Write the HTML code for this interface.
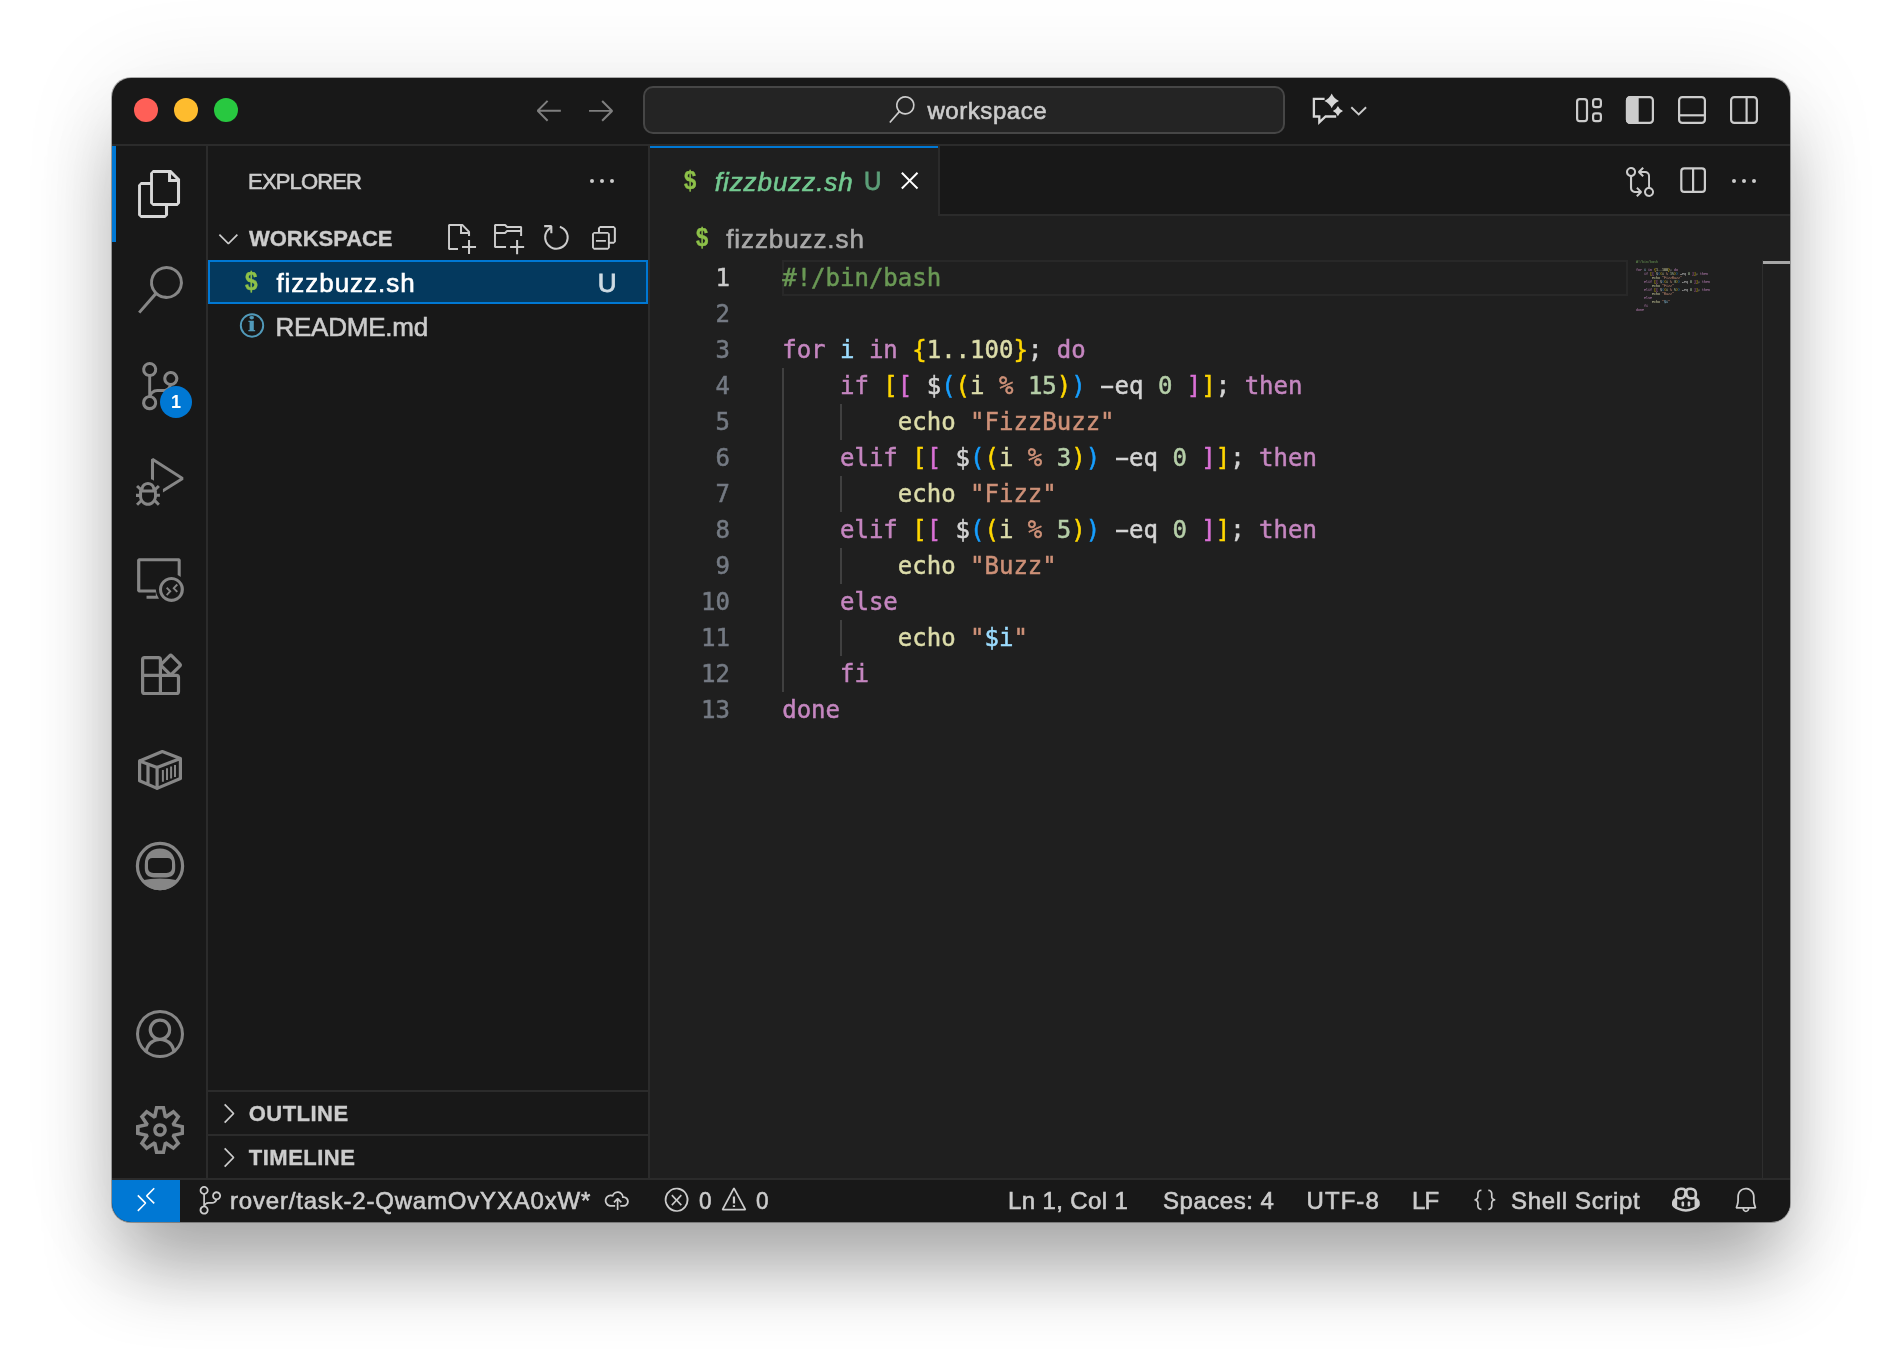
<!DOCTYPE html>
<html lang="en"><head><meta charset="utf-8"><title>fizzbuzz.sh — workspace</title>
<style>
html,body{margin:0;padding:0}
body{width:1902px;height:1370px;background:#fff;position:relative;overflow:hidden}
#win{position:absolute;left:112px;top:78px;width:1678px;height:1144px;background:#181818;border-radius:19px;overflow:hidden;
 box-shadow:0 0 0 1px rgba(0,0,0,.3),0 4px 100px rgba(0,0,0,.09),0 56px 76px -8px rgba(0,0,0,.31)}
#ly{position:absolute;left:0;top:0;width:100%;height:100%;will-change:transform}
#ly>div,#ly>svg,#ly>pre{position:absolute}
.t{white-space:pre}
.ic{display:block;overflow:visible}
pre{margin:0;font:24px/36px 'DejaVu Sans Mono', 'Liberation Mono', monospace;color:#d4d4d4;-webkit-text-stroke:.5px}
.nums{text-align:right;color:#747a83}
.nums .cur{color:#cccccc}
.mm{transform-origin:0 0;transform:scale(.1384,.1111);opacity:.8}
.hy{display:inline-block;transform:scaleX(1.85)}
.com{color:#6A9955}.kw{color:#C586C0}.var{color:#9CDCFE}.y{color:#FFD700}.p{color:#DA70D6}.b{color:#179FFF}.fn{color:#DCDCAA}.num{color:#B5CEA8}.str{color:#CE9178}</style></head>
<body><div id="win"><div id="ly">
<div style="left:0px;top:66px;width:1678px;height:2px;background:#2b2b2b;"></div>
<div style="left:22px;top:20px;width:24px;height:24px;border-radius:50%;background:#ff5f57"></div>
<div style="left:62px;top:20px;width:24px;height:24px;border-radius:50%;background:#febc2e"></div>
<div style="left:102px;top:20px;width:24px;height:24px;border-radius:50%;background:#28c840"></div>
<svg class="ic" style="left:421.31px;top:16.07px" width="31.77" height="31.77" viewBox="0 0 16 16" preserveAspectRatio="none" fill="#7f7f7f"><path d="M6.99 3.09 2.03 8.11V8.8L6.99 13.81L7.73 13.07L3.57 8.96H14.03V7.95H3.57L7.73 3.79Z"/></svg>
<svg class="ic" style="left:473.24px;top:15.93px" width="31.72" height="31.72" viewBox="0 0 16 16" preserveAspectRatio="none" fill="#7f7f7f"><path d="M9.01 13.87 14.03 8.91V8.16L9.01 3.2L8.27 3.89L12.43 8.05H2.03V9.01H12.43L8.27 13.17Z"/></svg>
<div style="left:531px;top:8px;width:642px;height:48px;box-sizing:border-box;border:2px solid #464646;border-radius:10px;background:#242424"></div>
<svg class="ic" style="left:775.91px;top:18.31px" width="27.27" height="27.27" viewBox="0 0 16 16" preserveAspectRatio="none" fill="#cccccc"><path d="M10.19 0Q8.53 0 7.17 0.88Q5.81 1.76 5.15 3.25Q4.48 4.75 4.72 6.35Q4.96 7.95 6.03 9.12L0.69 15.25L1.44 15.89L6.77 9.81Q8.21 10.93 10 10.99Q11.79 11.04 13.28 10.03Q14.77 9.01 15.36 7.31Q15.95 5.6 15.41 3.87Q14.88 2.13 13.41 1.07Q11.95 0 10.19 0ZM10.19 9.97Q8.96 9.97 7.92 9.39Q6.88 8.8 6.27 7.76Q5.65 6.72 5.65 5.49Q5.65 4.27 6.27 3.23Q6.88 2.19 7.92 1.6Q8.96 1.01 10.19 1.01Q11.41 1.01 12.43 1.6Q13.44 2.19 14.05 3.23Q14.67 4.27 14.67 5.49Q14.67 6.72 14.05 7.76Q13.44 8.8 12.43 9.41Q11.41 10.03 10.19 10.03Z"/></svg>
<div class="t" style="left:815.40px;top:15.58px;font:24px/34px 'Liberation Sans', Arial, sans-serif;color:#cccccc;letter-spacing:0.567px;-webkit-text-stroke:0.6px;">workspace</div>
<svg class="ic" style="left:1198px;top:13px" width="36" height="36" viewBox="1310 91 36 36"><path d="M1324.6 98.9H1313.9V116.5H1319.3V122.3L1325.6 116.5H1336.2" fill="none" stroke="#d7d7d7" stroke-width="2.3" stroke-linejoin="miter"/><path d="M1331.7 93.6Q1333.89 98.71 1339 100.9Q1333.89 103.09 1331.7 108.2Q1329.51 103.09 1324.4 100.9Q1329.51 98.71 1331.7 93.6ZM1337.9 106Q1339.43 109.57 1343 111.1Q1339.43 112.63 1337.9 116.2Q1336.37 112.63 1332.8 111.1Q1336.37 109.57 1337.9 106Z" fill="#d7d7d7"/></svg>
<svg class="ic" style="left:1236px;top:25px" width="21" height="15" viewBox="1348 103 21 15"><path d="M1351.3 107.2 L1358.7 114.4 L1366.1 107.2" fill="none" stroke="#cccccc" stroke-width="1.9"/></svg>
<svg class="ic" style="left:1462px;top:17.8px" width="30" height="28.2" viewBox="1574 95.8 30 28.2"><rect x="1577.1" y="98.9" width="9.9" height="22" rx="2.6" fill="none" stroke="#cccccc" stroke-width="2.2"/><rect x="1593.1" y="98.9" width="7.8" height="8.1" rx="2.4" fill="none" stroke="#cccccc" stroke-width="2.2"/><rect x="1593.1" y="113.1" width="7.8" height="7.8" rx="2.4" fill="none" stroke="#cccccc" stroke-width="2.2"/></svg>
<svg class="ic" style="left:1512px;top:16px" width="32" height="32" viewBox="1624 94 32 32"><rect x="1627" y="97.1" width="25.9" height="25.8" rx="3.2" fill="none" stroke="#cccccc" stroke-width="2.2"/><path d="M1637.6 97.1H1630.2a3.2 3.2 0 0 0-3.2 3.2V119.7a3.2 3.2 0 0 0 3.2 3.2H1637.6Z" fill="#cccccc" stroke="#cccccc" stroke-width="2.2"/></svg>
<svg class="ic" style="left:1564px;top:16px" width="32" height="32" viewBox="1676 94 32 32"><rect x="1679.1" y="97.1" width="25.8" height="25.8" rx="3.2" fill="none" stroke="#cccccc" stroke-width="2.2"/><path d="M1679.1 115.3H1704.9" stroke="#cccccc" stroke-width="2.2"/></svg>
<svg class="ic" style="left:1616px;top:16px" width="32" height="32" viewBox="1728 94 32 32"><rect x="1731.1" y="97.1" width="25.8" height="25.8" rx="3.2" fill="none" stroke="#cccccc" stroke-width="2.2"/><path d="M1746.6 97.1V122.9" stroke="#cccccc" stroke-width="2.2"/></svg>
<div style="left:94px;top:68px;width:2px;height:1032px;background:#2b2b2b;"></div>
<div style="left:0px;top:68px;width:4px;height:96px;background:#0078d4;"></div>
<svg class="ic" style="left:23.94px;top:91.98px" width="48.05" height="48.05" viewBox="0 0 16 16" preserveAspectRatio="none" fill="#d7d7d7"><path d="M11.68 0H5.65L4.69 1.01V4H1.65L0.69 5.01V15.04L1.65 16H9.71L10.67 15.04V12H13.81L14.67 11.04V2.99ZM11.68 1.39 13.28 2.99H11.68ZM9.65 14.99H1.65V5.01H4.69V11.04L5.65 12H9.65ZM13.65 10.99H5.65V1.01H10.67V4H13.65Z"/></svg>
<svg class="ic" style="left:23.98px;top:187.93px" width="47.95" height="47.95" viewBox="0 0 16 16" preserveAspectRatio="none" fill="#868686"><path d="M10.19 0Q8.53 0 7.17 0.88Q5.81 1.76 5.15 3.25Q4.48 4.75 4.72 6.35Q4.96 7.95 6.03 9.12L0.69 15.25L1.44 15.89L6.77 9.81Q8.21 10.93 10 10.99Q11.79 11.04 13.28 10.03Q14.77 9.01 15.36 7.31Q15.95 5.6 15.41 3.87Q14.88 2.13 13.41 1.07Q11.95 0 10.19 0ZM10.19 9.97Q8.96 9.97 7.92 9.39Q6.88 8.8 6.27 7.76Q5.65 6.72 5.65 5.49Q5.65 4.27 6.27 3.23Q6.88 2.19 7.92 1.6Q8.96 1.01 10.19 1.01Q11.41 1.01 12.43 1.6Q13.44 2.19 14.05 3.23Q14.67 4.27 14.67 5.49Q14.67 6.72 14.05 7.76Q13.44 8.8 12.43 9.41Q11.41 10.03 10.19 10.03Z"/></svg>
<svg class="ic" style="left:23.81px;top:283.77px" width="48.34" height="48.34" viewBox="0 0 16 16" preserveAspectRatio="none" fill="#868686"><path d="M14.03 5.49Q14.03 4.8 13.65 4.19Q13.28 3.57 12.64 3.25Q12 2.93 11.31 2.99Q10.61 3.04 10.03 3.47Q9.44 3.89 9.2 4.56Q8.96 5.23 9.07 5.92Q9.17 6.61 9.65 7.12Q10.13 7.63 10.83 7.84Q10.56 8.37 10.08 8.67Q9.6 8.96 9.01 8.96H7.04Q5.87 8.96 5.01 9.76V4.91Q5.97 4.75 6.53 3.97Q7.09 3.2 7.01 2.24Q6.93 1.28 6.21 0.64Q5.49 0 4.53 0Q3.57 0 2.85 0.64Q2.13 1.28 2.05 2.24Q1.97 3.2 2.53 3.97Q3.09 4.75 4.05 4.91V10.99Q3.09 11.2 2.51 11.95Q1.92 12.69 2 13.65Q2.08 14.61 2.75 15.28Q3.41 15.95 4.37 16Q5.33 16.05 6.08 15.47Q6.83 14.88 6.99 13.92Q7.15 12.96 6.67 12.16Q6.19 11.36 5.23 11.09Q5.49 10.56 5.97 10.27Q6.45 9.97 7.04 9.97H9.01Q9.97 9.97 10.75 9.41Q11.52 8.85 11.84 7.95Q12.75 7.84 13.39 7.12Q14.03 6.4 14.03 5.49ZM3.04 2.51Q3.04 1.87 3.47 1.44Q3.89 1.01 4.53 1.01Q5.17 1.01 5.6 1.44Q6.03 1.87 6.03 2.48Q6.03 3.09 5.6 3.55Q5.17 4 4.53 4Q3.89 4 3.47 3.55Q3.04 3.09 3.04 2.51ZM6.03 13.44Q6.03 14.08 5.6 14.51Q5.17 14.93 4.53 14.93Q3.89 14.93 3.47 14.51Q3.04 14.08 3.04 13.47Q3.04 12.85 3.47 12.4Q3.89 11.95 4.53 11.95Q5.17 11.95 5.6 12.4Q6.03 12.85 6.03 13.44ZM11.52 6.99Q10.88 6.99 10.45 6.53Q10.03 6.08 10.03 5.47Q10.03 4.85 10.45 4.43Q10.88 4 11.49 4Q12.11 4 12.56 4.43Q13.01 4.85 13.01 5.47Q13.01 6.08 12.56 6.53Q12.11 6.99 11.52 6.99Z"/></svg>
<div class="t" style="left:48px;top:308px;width:32px;height:32px;border-radius:16px;background:#0078d4;color:#fff;font:bold 18px/32px 'Liberation Sans', Arial, sans-serif;text-align:center">1</div>
<svg class="ic" style="left:24.17px;top:380.33px" width="47.84" height="47.84" viewBox="0 0 16 16" preserveAspectRatio="none" fill="#868686"><path d="M7.31 9.01 6.4 9.87Q6.19 9.07 5.52 8.53Q4.85 8 4 8Q3.15 8 2.48 8.53Q1.81 9.07 1.6 9.87L0.69 9.01L0 9.71L1.17 10.83L1.01 10.99V12H0V13.01H1.01V13.07Q1.07 13.55 1.28 14.03L0 15.31L0.69 16L1.81 14.88Q2.19 15.41 2.77 15.71Q3.36 16 4 16Q4.64 16 5.23 15.71Q5.81 15.41 6.19 14.88L7.31 16L8 15.31L6.72 13.97Q6.93 13.55 6.99 13.01V12.96H8V12H6.99V10.99L6.88 10.83L8 9.71ZM4 9.01Q4.64 9.01 5.07 9.44Q5.49 9.87 5.49 10.51H2.51Q2.51 9.87 2.93 9.44Q3.36 9.01 4 9.01ZM6.03 13.01Q5.92 13.81 5.36 14.37Q4.8 14.93 4 14.99Q3.2 14.93 2.64 14.37Q2.08 13.81 2.03 13.01V11.52H6.03ZM15.84 6.4V7.25L9.01 11.57V10.4L14.67 6.83L6.03 1.33V7.63Q5.55 7.31 5.01 7.15V0.43L5.76 0Z"/></svg>
<svg class="ic" style="left:23.99px;top:475.89px" width="47.91" height="47.91" viewBox="0 0 16 16" preserveAspectRatio="none" fill="#868686"><path d="M0.91 1.44H14.45L14.93 1.92V7.68Q14.45 7.31 13.92 7.04V2.45H1.44V11.84H6.61Q6.61 13.55 7.68 14.93H3.52V13.92H6.61V12.85H0.91L0.37 12.37V1.92ZM11.84 7.68Q10.72 7.68 9.76 8.24Q8.8 8.8 8.24 9.76Q7.68 10.72 7.68 11.84Q7.68 12.96 8.24 13.92Q8.8 14.88 9.76 15.44Q10.72 16 11.84 16Q12.96 16 13.92 15.44Q14.88 14.88 15.44 13.92Q16 12.96 16 11.84Q16 10.72 15.44 9.76Q14.88 8.8 13.92 8.24Q12.96 7.68 11.84 7.68ZM11.84 14.93Q10.99 14.93 10.27 14.53Q9.55 14.13 9.12 13.41Q8.69 12.69 8.69 11.84Q8.69 10.99 9.12 10.27Q9.55 9.55 10.27 9.12Q10.99 8.69 11.84 8.69Q12.69 8.69 13.41 9.12Q14.13 9.55 14.53 10.27Q14.93 10.99 14.93 11.84Q14.93 12.69 14.53 13.41Q14.13 14.13 13.41 14.53Q12.69 14.93 11.84 14.93ZM13.55 12.85 12.16 11.41 13.55 9.97 14.03 10.45 13.01 11.41 14.03 12.43ZM10.03 11.52 10.99 12.48 10.03 13.49 10.45 13.92 11.89 12.48 10.45 11.04Z"/></svg>
<svg class="ic" style="left:24px;top:572px" width="48" height="48" viewBox="136 650 48 48"><path d="M142.6 659.6a2 2 0 0 1 2-2h13.8a2 2 0 0 1 2 2v15.8h16.1a2 2 0 0 1 2 2v14.1a2 2 0 0 1-2 2h-31.9a2 2 0 0 1-2-2ZM142.6 675.4h17.8v18.1" fill="none" stroke="#868686" stroke-width="3.2" stroke-linejoin="round"/><rect x="163.5" y="657.7" width="14.4" height="14.4" rx="1.6" transform="rotate(45 170.7 664.9)" fill="none" stroke="#868686" stroke-width="3.2"/></svg>
<svg class="ic" style="left:24px;top:668px" width="48" height="48" viewBox="136 746 48 48"><path d="M162.3 751.6L180.4 758.6V778.5L157.1 788.4L139.6 780.8V761Z M139.6 761L157.1 767.4L180.4 758.6 M157.1 767.4V788.4 M148 764.3V784.3" fill="none" stroke="#868686" stroke-width="3.2" stroke-linejoin="round" stroke-linecap="round"/><path d="M162.9 770V781.8 M167 768.3V780.1 M171.1 766.6V778.6 M175 765V777" fill="none" stroke="#868686" stroke-width="2" stroke-linecap="butt"/></svg>
<svg class="ic" style="left:24px;top:764px" width="48" height="48" viewBox="136 842 48 48"><circle cx="160" cy="866" r="22.6" fill="none" stroke="#868686" stroke-width="3.2"/><path fill-rule="evenodd" fill="#868686" d="M144.8 864.5C144.8 854 151.5 848.5 160 848.5S175.2 854 175.2 864.5V868.5C175.2 874.5 171.5 877.4 166 877.4H154C148.5 877.4 144.8 874.5 144.8 868.5ZM148 862.6C148 859.6 149.6 858.1 152.5 858.1H167.5C170.4 858.1 172 859.6 172 862.6V867.5C172 871 170 872.9 166.5 872.9H153.5C150 872.9 148 871 148 867.5Z"/><path fill="#868686" d="M140.8 880.6Q160 876.6 179.2 880.6A24 24 0 0 1 140.8 880.6Z"/></svg>
<svg class="ic" style="left:24.00px;top:932.00px" width="48.00" height="48.00" viewBox="0 0 16 16" preserveAspectRatio="none" fill="#868686"><path d="M16 8Q16 5.81 14.93 3.97Q13.87 2.13 12.03 1.07Q10.19 0 8 0Q5.81 0 3.97 1.07Q2.13 2.13 1.07 3.97Q0 5.81 0 8Q0 9.76 0.75 11.36Q1.49 12.96 2.83 14.08L3.52 14.61Q5.55 16 8 16Q10.45 16 12.48 14.61L13.23 14.08Q14.51 12.96 15.25 11.36Q16 9.76 16 8ZM8 14.99Q5.81 14.99 4 13.71L4.05 13.33Q4.21 12.8 4.48 12.35Q4.75 11.89 5.12 11.52Q5.49 11.15 5.92 10.88Q6.35 10.61 6.91 10.48Q7.47 10.35 8 10.35Q8.8 10.35 9.57 10.64Q10.35 10.93 10.91 11.49Q11.47 12.05 11.79 12.8Q11.95 13.23 12.05 13.71Q10.24 14.99 8 14.99ZM5.55 7.57Q5.33 7.09 5.33 6.56Q5.33 6.03 5.55 5.55Q5.76 5.07 6.11 4.72Q6.45 4.37 6.93 4.13Q7.41 3.89 8 3.89Q8.59 3.89 9.04 4.11Q9.49 4.32 9.87 4.69Q10.24 5.07 10.45 5.55Q10.67 6.03 10.67 6.59Q10.67 7.15 10.45 7.6Q10.24 8.05 9.87 8.43Q9.49 8.8 9.01 9.01Q8 9.44 6.93 9.01Q6.51 8.8 6.13 8.43Q5.76 8.05 5.55 7.57ZM12.96 12.91Q12.96 12.91 12.96 12.85V12.8Q12.75 12.05 12.29 11.41Q11.84 10.77 11.2 10.29Q10.72 9.92 10.13 9.65Q10.4 9.49 10.61 9.28Q10.99 8.91 11.25 8.48Q11.79 7.63 11.73 6.56Q11.79 5.81 11.49 5.12Q11.2 4.43 10.67 3.89Q10.13 3.36 9.44 3.09Q8.75 2.83 7.97 2.83Q7.2 2.83 6.51 3.09Q5.81 3.36 5.31 3.89Q4.8 4.43 4.51 5.12Q4.21 5.81 4.21 6.56Q4.21 7.09 4.37 7.6Q4.53 8.11 4.75 8.48Q4.96 8.85 5.39 9.28Q5.6 9.49 5.87 9.71Q5.33 9.92 4.85 10.29Q4.21 10.77 3.76 11.41Q3.31 12.05 3.04 12.85V12.91Q2.08 11.95 1.55 10.67Q1.01 9.39 1.01 8Q1.01 6.08 1.95 4.48Q2.88 2.88 4.48 1.95Q6.08 1.01 8 1.01Q9.92 1.01 11.52 1.95Q13.12 2.88 14.05 4.48Q14.99 6.08 14.99 8Q14.99 9.39 14.48 10.67Q13.97 11.95 12.96 12.91Z"/></svg>
<svg class="ic" style="left:24.00px;top:1028.00px" width="48.00" height="48.00" viewBox="0 0 16 16" preserveAspectRatio="none" fill="#868686"><path d="M13.23 5.81 16 6.4V9.6L13.23 10.19L14.83 12.53L12.53 14.77L10.19 13.23L9.6 16H6.4L5.81 13.23L3.47 14.83L1.23 12.53L2.77 10.19L0 9.6V6.4L2.77 5.81L1.23 3.47L3.47 1.17L5.81 2.77L6.4 0H9.6L10.19 2.77L12.53 1.17L14.83 3.47ZM12.21 9.23 14.88 8.69V7.36L12.21 6.77L11.84 5.92L13.33 3.63L12.43 2.67L10.13 4.21L9.23 3.84L8.69 1.17H7.36L6.83 3.84L5.97 4.21L3.68 2.67L2.72 3.63L4.27 5.92L3.89 6.77L1.23 7.36V8.69L3.89 9.23L4.27 10.08L2.72 12.37L3.68 13.33L5.97 11.79L6.83 12.16L7.36 14.83H8.69L9.23 12.16L10.13 11.79L12.43 13.33L13.33 12.37L11.84 10.08ZM6.72 6.08Q7.31 5.71 8 5.71Q8.96 5.71 9.63 6.37Q10.29 7.04 10.29 8Q10.29 8.8 9.76 9.44Q9.23 10.08 8.43 10.24Q7.63 10.4 6.91 10.03Q6.19 9.65 5.89 8.88Q5.6 8.11 5.81 7.33Q6.03 6.56 6.72 6.08ZM7.36 8.96Q7.68 9.12 8 9.12Q8.48 9.12 8.8 8.8Q9.12 8.48 9.12 8.03Q9.12 7.57 8.88 7.28Q8.64 6.99 8.24 6.91Q7.84 6.83 7.47 7.01Q7.09 7.2 6.93 7.57Q6.77 7.95 6.91 8.35Q7.04 8.75 7.36 8.96Z"/></svg>
<div style="left:536px;top:68px;width:2px;height:1032px;background:#2b2b2b;"></div>
<div class="t" style="left:136.10px;top:87.98px;font:22px/31px 'Liberation Sans', Arial, sans-serif;color:#cccccc;letter-spacing:-0.847px;-webkit-text-stroke:0.6px;">EXPLORER</div>
<svg class="ic" style="left:476px;top:99px" width="28" height="8" viewBox="588 177 28 8"><circle cx="592" cy="181" r="2" fill="#cccccc"/><circle cx="602" cy="181" r="2" fill="#cccccc"/><circle cx="612" cy="181" r="2" fill="#cccccc"/></svg>
<svg class="ic" style="left:100.62px;top:144.80px" width="30.87" height="30.87" viewBox="0 0 16 16" preserveAspectRatio="none" fill="#cccccc"><path d="M8 10.08 12.32 5.71 12.96 6.35 8.27 10.99H7.68L2.99 6.35L3.63 5.71Z"/></svg>
<div class="t" style="left:137.10px;top:144.88px;font:normal bold 22px/31px 'Liberation Sans', Arial, sans-serif;color:#cccccc;letter-spacing:-0.055px;-webkit-text-stroke:0.35px;">WORKSPACE</div>
<svg class="ic" style="left:331.95px;top:143.96px" width="32.04" height="32.04" viewBox="0 0 16 16" preserveAspectRatio="none" fill="#cccccc"><path d="M9.49 1.12 12.91 4.59 13.01 5.01V6.99H12V5.97H8V1.97H2.99V13.01H6.99V13.97H2.51L2.03 13.49V1.49L2.51 1.01H9.23ZM9.01 1.97V5.01H11.89ZM13.01 16H12V13.01H9.01V12H12V9.01H13.01V12H16V13.01H13.01Z"/></svg>
<svg class="ic" style="left:379.81px;top:143.91px" width="32.14" height="32.14" viewBox="0 0 16 16" preserveAspectRatio="none" fill="#cccccc"><path d="M14.51 1.97H7.73L6.88 1.17L6.51 1.01H1.49L1.01 1.49V12.48L1.49 13.01H6.99V12H1.97V5.97H6.51L6.83 5.87L7.68 5.01H14.03L13.97 6.99H14.99V2.51ZM13.97 4H7.47L7.15 4.16L6.29 5.01H2.03V2.03H6.29L7.15 2.88L7.52 2.99H14.03ZM13.01 16H12V13.01H9.01V12H12V9.01H13.01V12H16V13.01H13.01Z"/></svg>
<svg class="ic" style="left:427.58px;top:143.15px" width="32.84" height="32.84" viewBox="0 0 16 16" preserveAspectRatio="none" fill="#cccccc"><path d="M4.69 2.99H2.03V1.97H5.49L6.03 2.51V5.97H5.01V4Q3.63 5.01 3.17 6.69Q2.72 8.37 3.41 9.97Q4.11 11.57 5.63 12.4Q7.15 13.23 8.85 12.93Q10.56 12.64 11.71 11.36Q12.85 10.08 12.99 8.35Q13.12 6.61 12.16 5.2Q11.2 3.79 9.55 3.25L9.81 2.29Q11.15 2.72 12.13 3.65Q13.12 4.59 13.6 5.87Q14.08 7.15 13.97 8.51Q13.87 9.87 13.17 11.04Q12.48 12.21 11.33 12.99Q10.19 13.76 8.83 13.95Q7.47 14.13 6.16 13.71Q4.85 13.28 3.87 12.35Q2.88 11.41 2.4 10.13Q1.92 8.85 2.03 7.49Q2.13 6.13 2.83 4.96Q3.52 3.79 4.69 2.99Z"/></svg>
<svg class="ic" style="left:476.05px;top:144.00px" width="31.80" height="31.80" viewBox="0 0 16 16" preserveAspectRatio="none" fill="#cccccc"><path d="M9.01 9.01H4V9.97H9.01ZM5.01 2.99 6.03 1.97H13.01L14.03 2.99V9.97L13.01 10.99H10.99V13.01L10.03 13.97H2.99L2.03 13.01V5.97L2.99 5.01H5.01ZM6.03 5.01H10.03L10.99 5.97V9.97H13.01V2.99H6.03ZM10.03 5.97H2.99V13.01H10.03Z"/></svg>
<div style="left:96px;top:182px;width:440px;height:44px;box-sizing:border-box;border:2px solid #0078d4;background:#04395e"></div>
<div class="t" style="left:133.00px;top:184.96px;font:normal bold 25.5px/36px 'Liberation Sans', Arial, sans-serif;color:#8dc149;letter-spacing:0.000px;transform:scaleX(0.886);transform-origin:0 0;-webkit-text-stroke:0.35px;">$</div>
<div class="t" style="left:164.40px;top:186.59px;font:26px/36px 'Liberation Sans', Arial, sans-serif;color:#ffffff;letter-spacing:0.966px;-webkit-text-stroke:0.6px;">fizzbuzz.sh</div>
<div class="t" style="left:485.70px;top:186.59px;font:26px/36px 'Liberation Sans', Arial, sans-serif;color:#cfdbe4;letter-spacing:0.000px;-webkit-text-stroke:0.8px;">U</div>
<svg class="ic" style="left:126px;top:234px;" width="28" height="28" viewBox="0 0 28 28"><circle cx="14" cy="13.5" r="11.2" fill="none" stroke="#519aba" stroke-width="1.9"/></svg>
<div class="t" style="left:136.20px;top:230.39px;font:normal bold 22px/31px 'Liberation Serif', serif;color:#519aba;letter-spacing:0.000px;transform:scaleX(1.200);transform-origin:0 0;-webkit-text-stroke:0.35px;">i</div>
<div class="t" style="left:163.40px;top:231.09px;font:26px/36px 'Liberation Sans', Arial, sans-serif;color:#cccccc;letter-spacing:-0.215px;-webkit-text-stroke:0.6px;">README.md</div>
<div style="left:96px;top:1012px;width:440px;height:2px;background:#2b2b2b;"></div>
<svg class="ic" style="left:100.97px;top:1019.74px" width="30.91" height="30.91" viewBox="0 0 16 16" preserveAspectRatio="none" fill="#cccccc"><path d="M10.08 8 5.71 3.68 6.35 3.04 10.99 7.73V8.32L6.35 13.01L5.71 12.37Z"/></svg>
<div class="t" style="left:136.80px;top:1019.68px;font:normal bold 22px/31px 'Liberation Sans', Arial, sans-serif;color:#cccccc;letter-spacing:0.454px;-webkit-text-stroke:0.35px;">OUTLINE</div>
<div style="left:96px;top:1056px;width:440px;height:2px;background:#2b2b2b;"></div>
<svg class="ic" style="left:100.97px;top:1063.74px" width="30.91" height="30.91" viewBox="0 0 16 16" preserveAspectRatio="none" fill="#cccccc"><path d="M10.08 8 5.71 3.68 6.35 3.04 10.99 7.73V8.32L6.35 13.01L5.71 12.37Z"/></svg>
<div class="t" style="left:136.80px;top:1063.68px;font:normal bold 22px/31px 'Liberation Sans', Arial, sans-serif;color:#cccccc;letter-spacing:0.487px;-webkit-text-stroke:0.35px;">TIMELINE</div>
<div style="left:538px;top:68px;width:1140px;height:1032px;background:#1f1f1f;"></div>
<div style="left:538px;top:68px;width:1140px;height:68px;background:#181818;"></div>
<div style="left:538px;top:136px;width:1140px;height:2px;background:#2b2b2b;"></div>
<div style="left:538px;top:68px;width:288px;height:70px;background:#1f1f1f;"></div>
<div style="left:538px;top:68px;width:288px;height:2px;background:#0078d4;"></div>
<div style="left:826px;top:68px;width:2px;height:68px;background:#2b2b2b;"></div>
<div class="t" style="left:571.70px;top:83.76px;font:normal bold 25.5px/36px 'Liberation Sans', Arial, sans-serif;color:#8dc149;letter-spacing:0.000px;transform:scaleX(0.864);transform-origin:0 0;-webkit-text-stroke:0.35px;">$</div>
<div class="t" style="left:602.80px;top:85.59px;font:italic normal 26px/36px 'Liberation Sans', Arial, sans-serif;color:#73c991;letter-spacing:0.936px;-webkit-text-stroke:0.6px;">fizzbuzz.sh</div>
<div class="t" style="left:752.24px;top:86.04px;font:25px/35px 'Liberation Sans', Arial, sans-serif;color:#5c9f78;letter-spacing:0.000px;transform:scaleX(0.956);transform-origin:0 0;-webkit-text-stroke:0.8px;">U</div>
<svg class="ic" style="left:781.91px;top:87.36px" width="31.37" height="31.37" viewBox="0 0 16 16" preserveAspectRatio="none" fill="#ffffff"><path d="M8 8.69 11.63 12.37 12.37 11.63 8.69 8 12.37 4.37 11.63 3.63 8 7.31 4.37 3.63 3.63 4.37 7.31 8 3.63 11.63 4.37 12.37Z"/></svg>
<svg class="ic" style="left:1511.99px;top:87.19px" width="31.98" height="31.98" viewBox="0 0 16 16" preserveAspectRatio="none" fill="#cccccc"><path d="M7.41 13.01 6.13 11.73 6.77 11.04 8.91 13.17V13.87L6.77 16L6.08 15.25L7.36 13.97H5.49Q4.48 14.03 3.73 13.28Q2.99 12.53 2.99 11.52V5.97Q2.24 5.81 1.71 5.28Q1.17 4.75 1.04 4Q0.91 3.25 1.2 2.56Q1.49 1.87 2.11 1.44Q2.72 1.01 3.52 1.01Q4 1.01 4.48 1.17Q5.44 1.6 5.87 2.56Q6.03 3.04 6.03 3.52Q6.03 4.43 5.47 5.12Q4.91 5.81 4.05 5.97V11.47Q4.05 12.11 4.48 12.56Q4.91 13.01 5.55 13.01ZM2.72 4.75Q3.15 5.01 3.68 4.96Q4.21 4.91 4.59 4.53Q4.96 4.16 5.01 3.63Q5.07 3.09 4.8 2.69Q4.53 2.29 4.11 2.11Q3.68 1.92 3.25 2Q2.83 2.08 2.48 2.43Q2.13 2.77 2.05 3.2Q1.97 3.63 2.16 4.05Q2.35 4.48 2.72 4.75ZM13.01 11.04Q13.76 11.2 14.29 11.73Q14.93 12.37 15.01 13.25Q15.09 14.13 14.61 14.88Q14.19 15.52 13.49 15.81Q12.8 16.11 12.05 15.95Q11.31 15.79 10.77 15.25Q10.24 14.72 10.08 13.97Q9.92 13.23 10.21 12.53Q10.51 11.84 11.15 11.41Q11.57 11.15 12.05 11.04V5.49Q12.05 4.85 11.6 4.43Q11.15 4 10.56 4H8.69L9.97 5.28L9.23 5.97L7.09 3.84V3.15L9.23 1.01L9.97 1.71L8.69 2.99H10.56Q11.57 2.99 12.32 3.71Q13.07 4.43 13.01 5.49ZM12.69 14.99Q13.07 14.93 13.39 14.72Q13.71 14.51 13.89 14.13Q14.08 13.76 14.05 13.39Q14.03 13.01 13.79 12.64Q13.55 12.27 13.12 12.11Q12.69 11.95 12.24 12.03Q11.79 12.11 11.47 12.43Q11.15 12.75 11.07 13.2Q10.99 13.65 11.17 14.08Q11.36 14.51 11.79 14.77Q12.21 15.04 12.69 14.99Z"/></svg>
<svg class="ic" style="left:1566px;top:87px" width="30" height="30" viewBox="1678 165 30 30"><rect x="1681.3" y="168.3" width="23.6" height="23.6" rx="3" fill="none" stroke="#cccccc" stroke-width="2.2"/><path d="M1693.1 168.3V191.9" stroke="#cccccc" stroke-width="2.2"/></svg>
<svg class="ic" style="left:1618px;top:99px" width="28" height="8" viewBox="1730 177 28 8"><circle cx="1734" cy="181" r="2" fill="#cccccc"/><circle cx="1744" cy="181" r="2" fill="#cccccc"/><circle cx="1754" cy="181" r="2" fill="#cccccc"/></svg>
<div class="t" style="left:583.50px;top:140.76px;font:normal bold 25.5px/36px 'Liberation Sans', Arial, sans-serif;color:#8dc149;letter-spacing:0.000px;transform:scaleX(0.864);transform-origin:0 0;-webkit-text-stroke:0.35px;">$</div>
<div class="t" style="left:614.20px;top:142.69px;font:26px/36px 'Liberation Sans', Arial, sans-serif;color:#a9a9a9;letter-spacing:0.906px;-webkit-text-stroke:0.6px;">fizzbuzz.sh</div>
<div style="left:670px;top:182px;width:846px;height:36px;box-sizing:border-box;border:2px solid #282828"></div>
<div style="left:670px;top:290px;width:2px;height:324px;background:#404040;"></div>
<div style="left:728.3px;top:326px;width:2px;height:36px;background:#404040;"></div>
<div style="left:728.3px;top:398px;width:2px;height:36px;background:#404040;"></div>
<div style="left:728.3px;top:470px;width:2px;height:36px;background:#404040;"></div>
<div style="left:728.3px;top:542px;width:2px;height:36px;background:#404040;"></div>
<pre class="nums" style="left:539px;top:182px;width:79px"><span class="cur">1</span>
<span>2</span>
<span>3</span>
<span>4</span>
<span>5</span>
<span>6</span>
<span>7</span>
<span>8</span>
<span>9</span>
<span>10</span>
<span>11</span>
<span>12</span>
<span>13</span></pre>
<pre class="code" style="left:670.2px;top:182px"><span class="com">#!/bin/bash</span>

<span class="kw">for</span> <span class="var">i</span> <span class="kw">in</span> <span class="y">{</span><span class="fn">1..100</span><span class="y">}</span>; <span class="kw">do</span>
    <span class="kw">if</span> <span class="y">[</span><span class="p">[</span> $<span class="b">(</span><span class="y">(</span><span class="fn">i</span> <span class="str">%</span> <span class="num">15</span><span class="y">)</span><span class="b">)</span> <span class="hy">-</span>eq <span class="num">0</span> <span class="p">]</span><span class="y">]</span>; <span class="kw">then</span>
        <span class="fn">echo</span> <span class="str">&quot;FizzBuzz&quot;</span>
    <span class="kw">elif</span> <span class="y">[</span><span class="p">[</span> $<span class="b">(</span><span class="y">(</span><span class="fn">i</span> <span class="str">%</span> <span class="num">3</span><span class="y">)</span><span class="b">)</span> <span class="hy">-</span>eq <span class="num">0</span> <span class="p">]</span><span class="y">]</span>; <span class="kw">then</span>
        <span class="fn">echo</span> <span class="str">&quot;Fizz&quot;</span>
    <span class="kw">elif</span> <span class="y">[</span><span class="p">[</span> $<span class="b">(</span><span class="y">(</span><span class="fn">i</span> <span class="str">%</span> <span class="num">5</span><span class="y">)</span><span class="b">)</span> <span class="hy">-</span>eq <span class="num">0</span> <span class="p">]</span><span class="y">]</span>; <span class="kw">then</span>
        <span class="fn">echo</span> <span class="str">&quot;Buzz&quot;</span>
    <span class="kw">else</span>
        <span class="fn">echo</span> <span class="str">&quot;</span><span class="var">$i</span><span class="str">&quot;</span>
    <span class="kw">fi</span>
<span class="kw">done</span></pre>
<pre class="code mm" style="left:1524px;top:181.60000000000002px"><span class="com">#!/bin/bash</span>

<span class="kw">for</span> <span class="var">i</span> <span class="kw">in</span> <span class="y">{</span><span class="fn">1..100</span><span class="y">}</span>; <span class="kw">do</span>
    <span class="kw">if</span> <span class="y">[</span><span class="p">[</span> $<span class="b">(</span><span class="y">(</span><span class="fn">i</span> <span class="str">%</span> <span class="num">15</span><span class="y">)</span><span class="b">)</span> <span class="hy">-</span>eq <span class="num">0</span> <span class="p">]</span><span class="y">]</span>; <span class="kw">then</span>
        <span class="fn">echo</span> <span class="str">&quot;FizzBuzz&quot;</span>
    <span class="kw">elif</span> <span class="y">[</span><span class="p">[</span> $<span class="b">(</span><span class="y">(</span><span class="fn">i</span> <span class="str">%</span> <span class="num">3</span><span class="y">)</span><span class="b">)</span> <span class="hy">-</span>eq <span class="num">0</span> <span class="p">]</span><span class="y">]</span>; <span class="kw">then</span>
        <span class="fn">echo</span> <span class="str">&quot;Fizz&quot;</span>
    <span class="kw">elif</span> <span class="y">[</span><span class="p">[</span> $<span class="b">(</span><span class="y">(</span><span class="fn">i</span> <span class="str">%</span> <span class="num">5</span><span class="y">)</span><span class="b">)</span> <span class="hy">-</span>eq <span class="num">0</span> <span class="p">]</span><span class="y">]</span>; <span class="kw">then</span>
        <span class="fn">echo</span> <span class="str">&quot;Buzz&quot;</span>
    <span class="kw">else</span>
        <span class="fn">echo</span> <span class="str">&quot;</span><span class="var">$i</span><span class="str">&quot;</span>
    <span class="kw">fi</span>
<span class="kw">done</span></pre>
<div style="left:1650px;top:182px;width:1px;height:918px;background:#2e2e2e;"></div>
<div style="left:1651px;top:183px;width:27px;height:3px;background:#a6a6a6;"></div>
<div style="left:0px;top:1100px;width:1678px;height:43px;background:#181818;"></div>
<div style="left:0px;top:1100px;width:1678px;height:2px;background:#2b2b2b;"></div>
<div style="left:0px;top:1102px;width:68px;height:42px;background:#0078d4;"></div>
<svg class="ic" style="left:19.97px;top:1107.89px" width="28.25" height="28.25" viewBox="0 0 16 16" preserveAspectRatio="none" fill="#ffffff"><path d="M12.91 9.55 8.91 5.6 12.91 1.6 12.27 1.01 8 5.28V5.92L12.27 10.19ZM2.99 5.6 7.09 9.71 2.99 13.76 3.63 14.4 8 9.97V9.39L3.63 5.01Z"/></svg>
<svg class="ic" style="left:83.68px;top:1107.69px" width="28.61" height="28.61" viewBox="0 0 16 16" preserveAspectRatio="none" fill="#cccccc"><path d="M14.03 5.49Q14.03 4.8 13.65 4.19Q13.28 3.57 12.64 3.25Q12 2.93 11.31 2.99Q10.61 3.04 10.03 3.47Q9.44 3.89 9.2 4.56Q8.96 5.23 9.07 5.92Q9.17 6.61 9.65 7.12Q10.13 7.63 10.83 7.84Q10.56 8.37 10.08 8.67Q9.6 8.96 9.01 8.96H7.04Q5.87 8.96 5.01 9.76V4.91Q5.97 4.75 6.53 3.97Q7.09 3.2 7.01 2.24Q6.93 1.28 6.21 0.64Q5.49 0 4.53 0Q3.57 0 2.85 0.64Q2.13 1.28 2.05 2.24Q1.97 3.2 2.53 3.97Q3.09 4.75 4.05 4.91V10.99Q3.09 11.2 2.51 11.95Q1.92 12.69 2 13.65Q2.08 14.61 2.75 15.28Q3.41 15.95 4.37 16Q5.33 16.05 6.08 15.47Q6.83 14.88 6.99 13.92Q7.15 12.96 6.67 12.16Q6.19 11.36 5.23 11.09Q5.49 10.56 5.97 10.27Q6.45 9.97 7.04 9.97H9.01Q9.97 9.97 10.75 9.41Q11.52 8.85 11.84 7.95Q12.75 7.84 13.39 7.12Q14.03 6.4 14.03 5.49ZM3.04 2.51Q3.04 1.87 3.47 1.44Q3.89 1.01 4.53 1.01Q5.17 1.01 5.6 1.44Q6.03 1.87 6.03 2.48Q6.03 3.09 5.6 3.55Q5.17 4 4.53 4Q3.89 4 3.47 3.55Q3.04 3.09 3.04 2.51ZM6.03 13.44Q6.03 14.08 5.6 14.51Q5.17 14.93 4.53 14.93Q3.89 14.93 3.47 14.51Q3.04 14.08 3.04 13.47Q3.04 12.85 3.47 12.4Q3.89 11.95 4.53 11.95Q5.17 11.95 5.6 12.4Q6.03 12.85 6.03 13.44ZM11.52 6.99Q10.88 6.99 10.45 6.53Q10.03 6.08 10.03 5.47Q10.03 4.85 10.45 4.43Q10.88 4 11.49 4Q12.11 4 12.56 4.43Q13.01 4.85 13.01 5.47Q13.01 6.08 12.56 6.53Q12.11 6.99 11.52 6.99Z"/></svg>
<div class="t" style="left:118.00px;top:1105.68px;font:24px/34px 'Liberation Sans', Arial, sans-serif;color:#cccccc;letter-spacing:0.811px;-webkit-text-stroke:0.6px;">rover/task-2-QwamOvYXA0xW*</div>
<svg class="ic" style="left:491.22px;top:1107.86px" width="27.58" height="27.58" viewBox="0 0 16 16" preserveAspectRatio="none" fill="#cccccc"><path d="M11.95 5.97H12Q13.23 6.03 14.11 6.88Q14.99 7.73 14.99 8.99Q14.99 10.24 14.11 11.12Q13.23 12 12 12H10.03V10.99H12Q12.8 10.99 13.36 10.4Q13.92 9.81 13.92 9.01Q13.92 8.21 13.36 7.63Q12.8 7.04 12 6.99H11.09L10.99 6.13Q10.88 5.33 10.27 4.75Q9.65 4.16 8.83 4.03Q8 3.89 7.28 4.32Q6.56 4.75 6.24 5.49L5.92 6.24L5.07 6.08Q4.8 6.03 4.53 5.97Q3.47 6.03 2.77 6.72Q2.24 7.25 2.08 8Q1.92 8.75 2.21 9.44Q2.51 10.13 3.15 10.56Q3.79 10.99 4.53 10.99H7.04V12H4.53Q3.79 12 3.09 11.71Q2.4 11.41 1.92 10.83Q1.12 9.97 1.01 8.83Q0.91 7.68 1.49 6.72Q1.87 6.08 2.48 5.63Q3.09 5.17 3.84 5.04Q4.59 4.91 5.33 5.12Q5.81 4.05 6.83 3.47Q7.84 2.88 8.99 3.04Q10.13 3.2 10.96 4.03Q11.79 4.85 11.95 6.03ZM10.29 9.87 8.96 8.53V13.97H8V8.59L6.72 9.87L6.03 9.12L8.16 6.99H8.85L10.99 9.12Z"/></svg>
<svg class="ic" style="left:551.40px;top:1108.22px" width="27.54" height="27.54" viewBox="0 0 16 16" preserveAspectRatio="none" fill="#cccccc"><path d="M8.59 1.01Q9.76 1.07 10.85 1.6Q11.95 2.13 12.8 2.99Q14.83 5.17 14.83 8.11Q14.83 10.4 13.23 12.48Q12.43 13.44 11.41 14.05Q10.4 14.67 9.23 14.88Q6.67 15.36 4.59 14.19Q3.52 13.6 2.72 12.69Q1.92 11.79 1.49 10.67Q1.07 9.55 0.99 8.32Q0.91 7.09 1.28 5.97Q2.08 3.52 4.11 2.19Q5.07 1.55 6.21 1.23Q7.36 0.91 8.59 1.01ZM9.12 13.92Q11.15 13.44 12.48 11.79Q13.81 9.97 13.71 8Q13.71 6.77 13.25 5.65Q12.8 4.53 12 3.68Q10.45 2.13 8.43 1.97Q7.41 1.92 6.4 2.16Q5.39 2.4 4.59 2.99Q2.88 4.27 2.27 6.35Q1.65 8.43 2.53 10.35Q3.41 12.27 5.23 13.28Q6.08 13.81 7.09 13.97Q8.11 14.13 9.12 13.92ZM7.89 7.52 10.29 5.01 10.99 5.71 8.59 8.21 10.99 10.72 10.29 11.41 7.89 8.91 5.49 11.41 4.8 10.72 7.2 8.21 4.8 5.71 5.49 5.01Z"/></svg>
<div class="t" style="left:587.40px;top:1105.68px;font:24px/34px 'Liberation Sans', Arial, sans-serif;color:#cccccc;letter-spacing:0.000px;transform:scaleX(0.938);transform-origin:0 0;-webkit-text-stroke:0.6px;">0</div>
<svg class="ic" style="left:608.03px;top:1108.42px" width="27.93" height="27.93" viewBox="0 0 16 16" preserveAspectRatio="none" fill="#cccccc"><path d="M7.57 1.01H8.43L14.99 13.28L14.56 13.97H1.44L1.01 13.28ZM8 2.29 2.29 13.01H13.71ZM8.64 12V10.99H7.36V12ZM7.36 9.97V5.97H8.64V9.97Z"/></svg>
<div class="t" style="left:644.40px;top:1105.68px;font:24px/34px 'Liberation Sans', Arial, sans-serif;color:#cccccc;letter-spacing:0.000px;transform:scaleX(0.938);transform-origin:0 0;-webkit-text-stroke:0.6px;">0</div>
<div class="t" style="left:896.00px;top:1105.68px;font:24px/34px 'Liberation Sans', Arial, sans-serif;color:#cccccc;letter-spacing:0.387px;-webkit-text-stroke:0.6px;">Ln 1, Col 1</div>
<div class="t" style="left:1051.00px;top:1105.68px;font:24px/34px 'Liberation Sans', Arial, sans-serif;color:#cccccc;letter-spacing:0.527px;-webkit-text-stroke:0.6px;">Spaces: 4</div>
<div class="t" style="left:1194.60px;top:1105.68px;font:24px/34px 'Liberation Sans', Arial, sans-serif;color:#cccccc;letter-spacing:1.039px;-webkit-text-stroke:0.6px;">UTF-8</div>
<div class="t" style="left:1300.00px;top:1105.68px;font:24px/34px 'Liberation Sans', Arial, sans-serif;color:#cccccc;letter-spacing:-0.948px;-webkit-text-stroke:0.6px;">LF</div>
<svg class="ic" style="left:1359.33px;top:1108.17px" width="27.65" height="27.65" viewBox="0 0 16 16" preserveAspectRatio="none" fill="#cccccc"><path d="M6.03 2.99V1.97H5.92Q5.44 1.97 4.99 2.16Q4.53 2.35 4.21 2.69Q3.89 3.04 3.73 3.47Q3.57 3.89 3.52 4.32Q3.47 4.75 3.52 5.17V6.03Q3.52 6.35 3.41 6.61Q3.2 7.15 2.67 7.41Q2.4 7.52 2.08 7.52H2.03V8.48H2.08Q2.4 8.48 2.67 8.59V8.64Q2.93 8.75 3.09 8.91V8.96Q3.31 9.12 3.41 9.39Q3.52 9.65 3.52 9.97V10.83Q3.47 11.25 3.52 11.68V11.73Q3.57 12.11 3.73 12.53Q3.89 12.96 4.24 13.31Q4.59 13.65 5.01 13.81Q5.44 13.97 5.92 14.03H6.03V13.01H5.92Q5.6 13.01 5.33 12.91Q5.07 12.8 4.88 12.59Q4.69 12.37 4.59 12.11Q4.48 11.84 4.48 11.52V10.19Q4.48 9.87 4.43 9.55Q4.37 9.23 4.27 8.96Q4 8.37 3.52 8Q4 7.63 4.27 7.04Q4.37 6.77 4.43 6.45Q4.48 6.13 4.48 5.81V4.48Q4.48 4 4.72 3.65Q4.96 3.31 5.33 3.09Q5.6 2.99 5.92 2.99ZM10.03 13.01V13.97H10.08Q10.56 13.97 10.99 13.81Q11.41 13.65 11.76 13.31Q12.11 12.96 12.27 12.53Q12.43 12.16 12.48 11.68Q12.53 11.25 12.48 10.83V9.97Q12.48 9.65 12.59 9.39Q12.8 8.85 13.33 8.59Q13.6 8.48 13.92 8.48H14.03V7.52H13.92Q13.6 7.52 13.33 7.41V7.36Q13.07 7.25 12.91 7.09V7.04Q12.69 6.88 12.59 6.61Q12.48 6.35 12.48 6.03V5.17Q12.53 4.75 12.48 4.32V4.27Q12.43 3.89 12.27 3.47Q12.11 3.04 11.76 2.69Q11.41 2.35 10.99 2.16Q10.56 1.97 10.08 2.03H10.03V2.99H10.08Q10.4 2.99 10.67 3.09Q10.93 3.2 11.12 3.41Q11.31 3.63 11.41 3.89Q11.52 4.16 11.52 4.48V5.81Q11.52 6.13 11.57 6.45Q11.63 6.77 11.73 7.04Q12 7.63 12.48 8Q12 8.37 11.73 8.96Q11.63 9.23 11.57 9.55Q11.52 9.87 11.52 10.19V11.52Q11.52 12 11.28 12.35Q11.04 12.69 10.67 12.91Q10.4 13.01 10.08 13.01Z"/></svg>
<div class="t" style="left:1399.00px;top:1105.68px;font:24px/34px 'Liberation Sans', Arial, sans-serif;color:#cccccc;letter-spacing:0.662px;-webkit-text-stroke:0.6px;">Shell Script</div>
<svg class="ic" style="left:1560.01px;top:1106.40px" width="27.78" height="27.78" viewBox="0 0 16 16" preserveAspectRatio="none" fill="#cccccc"><path d="M6.24 9.97Q6.56 9.97 6.77 10.21Q6.99 10.45 6.99 10.77V12.27Q6.99 12.59 6.77 12.8Q6.56 13.01 6.24 13.01Q5.92 13.01 5.71 12.8Q5.49 12.59 5.49 12.27V10.77Q5.49 10.45 5.71 10.21Q5.92 9.97 6.24 9.97ZM10.51 10.77Q10.51 10.45 10.29 10.21Q10.08 9.97 9.76 9.97Q9.44 9.97 9.23 10.21Q9.01 10.45 9.01 10.77V12.27Q9.01 12.59 9.23 12.8Q9.44 13.01 9.76 13.01Q10.08 13.01 10.29 12.8Q10.51 12.59 10.51 12.27ZM7.84 2.77Q7.95 2.83 8 2.93L8.16 2.77Q9.07 1.76 11.09 2.03Q12.96 2.24 13.81 3.25Q14.51 4.16 14.51 5.76Q14.51 6.77 14.24 7.41L14.4 8.27H14.45Q15.2 8.64 15.6 9.31Q16 9.97 16 10.72V12Q16 12.27 15.84 12.59Q15.73 12.75 15.55 12.99Q15.36 13.23 14.99 13.49L14.4 13.92Q14.08 14.19 13.71 14.4Q13.07 14.77 12.37 15.04Q10.19 16 8 16Q5.81 16 3.63 15.04Q2.93 14.77 2.29 14.4Q1.92 14.19 1.6 13.92L1.01 13.49Q0.64 13.23 0.45 12.99Q0.27 12.75 0.16 12.59Q0 12.27 0 12V10.72Q0 9.97 0.4 9.31Q0.8 8.64 1.55 8.27H1.6L1.76 7.41Q1.49 6.77 1.49 5.76Q1.49 4.16 2.19 3.25Q3.04 2.24 4.91 2.03Q6.93 1.76 7.84 2.77ZM3.04 8.69 2.99 8.8V13.07L3.04 13.12Q3.57 13.44 4.21 13.71Q6.13 14.51 8 14.51Q9.87 14.51 11.79 13.71Q12.43 13.44 12.96 13.12L13.01 13.07V8.8L12.96 8.69Q12.32 9.01 11.25 9.01Q9.49 9.01 8.53 8Q8.21 7.68 8 7.25Q7.79 7.68 7.47 8Q6.51 9.01 4.75 9.01Q3.68 9.01 3.04 8.69ZM6.77 3.79Q6.35 3.36 5.07 3.49Q3.79 3.63 3.39 4.13Q2.99 4.64 2.99 5.71Q2.99 6.77 3.31 7.15Q3.63 7.52 4.75 7.52Q5.87 7.52 6.37 6.99Q6.88 6.45 6.99 5.39Q7.15 4.21 6.77 3.79ZM9.23 3.79Q8.85 4.21 9.01 5.39Q9.12 6.45 9.63 6.99Q10.13 7.52 11.25 7.52Q12.37 7.52 12.69 7.15Q13.01 6.77 13.01 5.71Q13.01 4.64 12.61 4.13Q12.21 3.63 10.93 3.49Q9.65 3.36 9.23 3.79Z"/></svg>
<svg class="ic" style="left:1619.95px;top:1108.07px" width="27.91" height="27.91" viewBox="0 0 16 16" preserveAspectRatio="none" fill="#cccccc"><path d="M13.39 10.56Q13.01 9.44 13.01 8.21V6.19Q13.01 5.23 12.69 4.35Q12.37 3.47 11.73 2.75Q11.09 2.03 10.27 1.57Q9.44 1.12 8.48 1.01Q7.41 0.91 6.4 1.25Q5.39 1.6 4.61 2.32Q3.84 3.04 3.41 4Q2.99 4.96 2.99 6.03V8.21Q2.99 9.44 2.61 10.56L2.03 12.32L2.45 13.01H5.97Q5.97 13.81 6.56 14.4Q7.15 14.99 7.97 14.99Q8.8 14.99 9.39 14.4Q9.97 13.81 9.97 13.01H13.49L13.97 12.32ZM8.69 13.71Q8.37 14.03 7.97 14.03Q7.57 14.03 7.28 13.73Q6.99 13.44 6.99 13.01H8.96Q9.01 13.44 8.69 13.71ZM3.15 12 3.52 10.88Q4 9.6 4 8.21V6.03Q4 5.17 4.35 4.37Q4.69 3.57 5.31 3.01Q5.92 2.45 6.75 2.19Q7.57 1.92 8.37 2.03Q9.97 2.24 10.99 3.41Q11.47 4 11.73 4.72Q12 5.44 12 6.19V8.21Q12 9.6 12.43 10.93L12.8 12Z"/></svg>
</div></div></body></html>
